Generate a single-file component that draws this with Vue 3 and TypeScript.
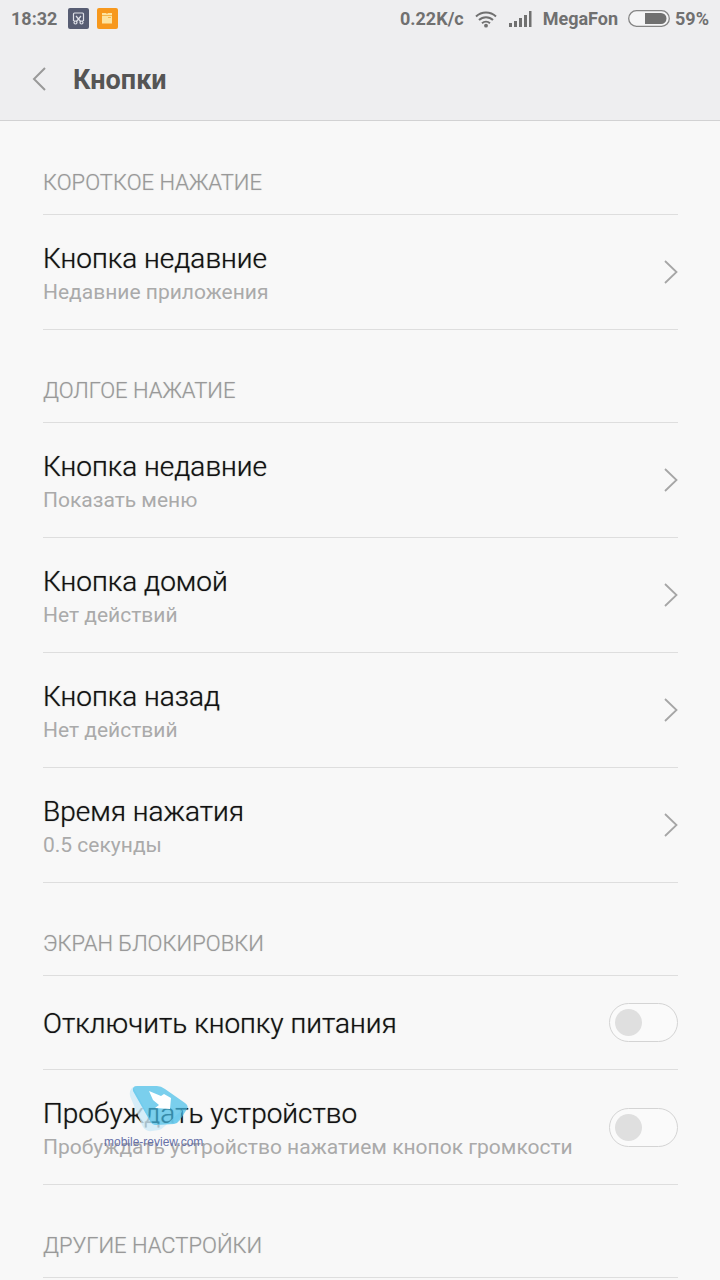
<script setup lang="ts">
import { ref } from 'vue'

interface Item {
  id: string
  title: string
  note?: string
  kind: 'link' | 'switch'
  watermark?: boolean
}

interface Section {
  title: string
  items: Item[]
}

const sections: Section[] = [
  {
    title: 'КОРОТКОЕ НАЖАТИЕ',
    items: [{ id: 'short-recent', title: 'Кнопка недавние', note: 'Недавние приложения', kind: 'link' }],
  },
  {
    title: 'ДОЛГОЕ НАЖАТИЕ',
    items: [
      { id: 'long-recent', title: 'Кнопка недавние', note: 'Показать меню', kind: 'link' },
      { id: 'long-home', title: 'Кнопка домой', note: 'Нет действий', kind: 'link' },
      { id: 'long-back', title: 'Кнопка назад', note: 'Нет действий', kind: 'link' },
      { id: 'press-time', title: 'Время нажатия', note: '0.5 секунды', kind: 'link' },
    ],
  },
  {
    title: 'ЭКРАН БЛОКИРОВКИ',
    items: [
      { id: 'power', title: 'Отключить кнопку питания', kind: 'switch' },
      {
        id: 'wake',
        title: 'Пробуждать устройство',
        note: 'Пробуждать устройство нажатием кнопок громкости',
        kind: 'switch',
        watermark: true,
      },
    ],
  },
  { title: 'ДРУГИЕ НАСТРОЙКИ', items: [] },
]

const enabled = ref<Record<string, boolean>>({ power: false, wake: false })
</script>

<template>
  <div class="screen">
    <header class="top">
      <div class="status">
        <span>18:32</span>
        <svg class="app-icon" viewBox="0 0 21 21" aria-hidden="true">
          <rect width="21" height="21" rx="2" fill="#575d73" />
          <g fill="none" stroke="#dfe1e8" stroke-width="1.200">
            <path d="M6.500 12.500h-1v-6.500a1 1 0 0 1 1-1h8a1 1 0 0 1 1 1v6.500h-1" />
            <path d="M8 8l5 6M13 8l-5 6" />
            <circle cx="7.500" cy="14.500" r="1.500" />
            <circle cx="13.500" cy="14.500" r="1.500" />
          </g>
        </svg>
        <svg class="app-icon orange" viewBox="0 0 21 21" aria-hidden="true">
          <rect width="21" height="21" rx="2" fill="#f7981d" />
          <path d="M5 5h4l1 1 1-1h4v10.500H5z" fill="#fde3a0" />
          <path d="M5 7.500h10M11 9.500h3" stroke="#f5b64c" stroke-width="1" />
        </svg>
        <span class="speed">0.22K/c</span>
        <svg class="wifi" viewBox="0 0 22 18" aria-hidden="true">
          <g fill="none" stroke="#707070" stroke-width="2">
            <path d="M1 6.500a14.500 14.500 0 0 1 20 0" />
            <path d="M4 10a10 10 0 0 1 14 0" />
            <path d="M7 13.200a6 6 0 0 1 8 0" />
          </g>
          <circle cx="11" cy="15.700" r="1.900" fill="#707070" />
        </svg>
        <svg class="signal" viewBox="0 0 24 18" aria-hidden="true">
          <path
            d="M1 13h3v4H1zM6 11h3v6H6zM11 8h3v9h-3zM16 5h3v12h-3zM21 1h2.500v16H21z"
            fill="#707070"
          />
        </svg>
        <span>MegaFon</span>
        <svg class="battery" viewBox="0 0 42 17" aria-hidden="true">
          <rect x="0.700" y="0.700" width="40.600" height="15.600" rx="7.800" fill="#f5f5f6" stroke="#858585" stroke-width="1.300" />
          <path d="M17 3h16a5.500 5.500 0 0 1 0 11H17z" fill="#707070" />
        </svg>
        <span>59%</span>
      </div>
      <div class="bar">
        <button class="back" type="button" aria-label="Назад">
          <svg viewBox="0 0 14 24" aria-hidden="true">
            <path d="M13 1L2 12l11 11" fill="none" stroke="#999" stroke-width="2" />
          </svg>
        </button>
        <h1>Кнопки</h1>
      </div>
    </header>

    <main>
      <section v-for="section in sections" :key="section.title">
        <h2>{{ section.title }}</h2>
        <template v-for="item in section.items" :key="item.id">
          <a v-if="item.kind === 'link'" class="row" :href="'#' + item.id">
            <span class="text">
              <span class="title">{{ item.title }}</span>
              <span class="note">{{ item.note }}</span>
            </span>
            <svg class="chevron" viewBox="0 0 14 24" aria-hidden="true">
              <path d="M1 1l11.500 11L1 23" fill="none" stroke="#a6a6a6" stroke-width="1.800" />
            </svg>
          </a>
          <label v-else class="row" :class="{ single: !item.note }">
            <span class="text">
              <span class="title">{{ item.title }}</span>
              <span v-if="item.note" class="note">{{ item.note }}</span>
            </span>
            <input v-model="enabled[item.id]" class="switch" type="checkbox" role="switch" />
            <span v-if="item.watermark" class="watermark">
              <svg viewBox="0 0 60 48" aria-hidden="true">
                <path
                  d="M4 2Q0 5 1 11L13 40q3 7 10 6l7-1q3-1 6-4l18-17-6 14-24 1z"
                  fill="#cdeaf7"
                  opacity="0.800"
                />
                <path
                  d="M8 1h20q4 0 8 3l20 14q4 3 2 6l-7 11q-2 3-6 4l-18 1q-4 0-6-4L4 6Q3 1 8 1z"
                  fill="#45bde8"
                  opacity="0.700"
                />
                <path d="M20 6l12 5 3-2 7 4-1 11-15-1 4-3-6-5z" fill="#fff" />
              </svg>
              <span>mobile-review.com</span>
            </span>
          </label>
        </template>
      </section>
    </main>
  </div>
</template>

<style>
html,
body {
  background: #f8f8f8;
}

body {
  margin: 0;
}
</style>

<style scoped>
.screen {
  height: 100vh;
  overflow: hidden;
  background: #f8f8f8;
  color: #222;
  font-family: Roboto, 'Noto Sans', sans-serif;
}

.top {
  background: #eeeef0;
  border-bottom: 1px solid #d2d2d3;
}

.status {
  display: flex;
  align-items: center;
  height: 37px;
  padding: 0 11px;
  color: #707070;
  font-size: 18px;
  font-weight: 700;
}

.app-icon {
  width: 21px;
  height: 21px;
  margin-left: 11px;
}

.app-icon.orange {
  margin-left: 8px;
}

.speed {
  margin-left: auto;
}

.wifi {
  width: 22px;
  height: 18px;
  margin: 0 11px;
}

.signal {
  width: 24px;
  height: 18px;
  margin-right: 11px;
}

.battery {
  width: 42px;
  height: 17px;
  margin: 0 5px 0 10px;
}

.bar {
  display: flex;
  align-items: center;
  height: 83px;
  padding: 0 32px;
}

.back {
  display: flex;
  padding: 0;
  border: 0;
  background: none;
}

.back svg {
  width: 14px;
  height: 24px;
}

h1 {
  margin: 0 0 0 27px;
  padding-top: 2px;
  color: #555;
  font-size: 27px;
  font-weight: 700;
  line-height: 32px;
}

main {
  padding: 1px 42px 0 43px;
}

h2 {
  box-sizing: border-box;
  height: 93px;
  margin: 0;
  padding-top: 47px;
  border-bottom: 1px solid #dedede;
  color: #999;
  font-size: 22px;
  font-weight: 300;
  line-height: 28px;
  text-shadow: 0 0 1px rgba(150, 150, 150, 0.5);
}

.row {
  position: relative;
  box-sizing: border-box;
  display: flex;
  align-items: center;
  justify-content: space-between;
  min-height: 115px;
  border-bottom: 1px solid #dedede;
  color: inherit;
  text-decoration: none;
}

.row.single {
  min-height: 94px;
}

.text {
  display: flex;
  flex-direction: column;
  padding-top: 4px;
}

.single .text {
  padding-top: 2px;
}

.title {
  color: #111;
  font-size: 28px;
  font-weight: 300;
  line-height: 36px;
  text-shadow: 0 0 1px rgba(0, 0, 0, 0.6);
}

.note {
  color: #aaa;
  font-size: 21px;
  font-weight: 400;
  line-height: 30px;
}

.chevron {
  flex: none;
  width: 14px;
  height: 24px;
}

.switch {
  appearance: none;
  flex: none;
  display: flex;
  align-items: center;
  box-sizing: border-box;
  width: 69px;
  height: 39px;
  margin: 0;
  padding: 0 5px;
  border: 1px solid #d4d4d4;
  border-radius: 20px;
  background: #fafafa;
}

.switch::before {
  content: '';
  width: 27px;
  height: 27px;
  border-radius: 50%;
  background: #dfdfdf;
}

.switch:checked {
  justify-content: flex-end;
}

.watermark {
  position: absolute;
  top: 15px;
  left: 61px;
  display: flex;
  flex-direction: column;
  color: #6670a8;
  font-family: 'Liberation Sans Narrow', 'Liberation Sans', sans-serif;
  font-size: 12px;
  line-height: 18px;
  pointer-events: none;
}

.watermark svg {
  width: 60px;
  height: 48px;
  margin-left: 25px;
}
</style>
